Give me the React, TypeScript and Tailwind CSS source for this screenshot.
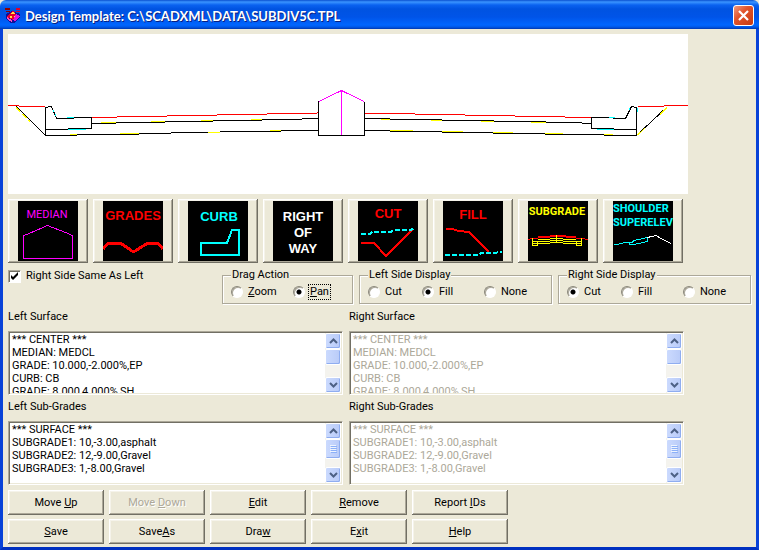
import React, { useState } from "react";

const raised =
  "bg-[#ece9d8] shadow-[inset_-1px_-1px_#716f64,inset_1px_1px_#ffffff,inset_-2px_-2px_#aca899,inset_2px_2px_#f5f3ea]";

function AppLogo() {
  return (
    <svg width="16" height="16" viewBox="0 0 16 16" shapeRendering="crispEdges" aria-hidden="true">
      <path d="M0 0h5v2h-5zM1 3h4v1h-4z" fill="#8b0000" />
      <path d="M11 0h4v2h-4zM11 3h4v1h-4z" fill="#e0002a" />
      <path d="M1 6l6 -3l8 3v4l-6 5h-3l-5 -4z" fill="#10109a" />
      <path d="M8 2l5 7l-5 3l-6 -3z" fill="#e8002c" />
      <path d="M8 3l2 3h-4zM5 8h2v2h-2zM9 8h2v2h-2z" fill="#ffe84a" />
      <path d="M11 6l4 2l-5 5l-2 -1z" fill="#e010e0" />
      <path d="M2 9l5 3v2l-5 -3z" fill="#ff50c0" />
    </svg>
  );
}

function TitleBar() {
  return (
    <header className="flex h-[29px] items-center rounded-t-md bg-[linear-gradient(to_bottom,#0a50d0_0,#3a94ff_2px,#0a62f0_5px,#0053e1_9px,#0054e8_17px,#0066ff_25px,#0058e8_27px,#0038b0_29px)] pt-[2px] pr-[5px] pl-[5px]">
      <AppLogo />
      <h1 className="ml-1 flex-1 font-[Lato,'Noto_Sans',sans-serif] text-[13px] leading-[18px] font-bold whitespace-nowrap text-white [text-shadow:1px_1px_#0a1f80]">
        Design Template: C:\SCADXML\DATA\SUBDIV5C.TPL
      </h1>
      <button
        aria-label="Close"
        className="flex size-[21px] items-center justify-center rounded-[3px] border border-white bg-[linear-gradient(135deg,#f09a80,#e1542c_40%,#c83a10)]"
      >
        <svg width="13" height="13" viewBox="0 0 13 13" aria-hidden="true">
          <path d="M2 2l9 9M11 2l-9 9" stroke="#fff" strokeWidth="2.2" />
        </svg>
      </button>
    </header>
  );
}

function CrossSection() {
  return (
    <svg
      className="mr-[63px] block bg-white"
      viewBox="8 34 680 160"
      shapeRendering="crispEdges"
      fill="none"
      strokeWidth="1"
      role="img"
      aria-label="Template cross section"
    >
      <g stroke="#ff0000">
        <path d="M8 105.5H19M19 106.5H45" />
        <path d="M92 117.5H117M117 116.5H167M167 115.5H217M217 114.5H267M267 113.5H317M317.5 113V112" />
        <path d="M364 113.5H415M415 114.5H465M465 115.5H515M515 116.5H565M565 117.5H591" />
        <path d="M638 106.5H664M664 105.5H688" />
      </g>
      <g stroke="#000000">
        <path d="M16.5 106.5L45.5 135.5V107.5L51.5 106.5L56.5 118.5H74M74 117.5H91.5V128.5H68M68 129.5H45" />
        <path d="M92 123.5H116M116 122.5H165M165 121.5H213M213 120.5H262M262 119.5H302M302 118.5H318" />
        <path d="M45 135.5H77M77 134.5H139M139 133.5H171M171 132.5H220M220 131.5H281M281 130.5H318" />
        <path d="M318.5 101V135.5H364.5V102" />
        <path d="M364 118.5H390M390 119.5H442M442 120.5H494M494 121.5H546M546 122.5H582M582 123.5H591" />
        <path d="M364 130.5H390M390 131.5H442M442 132.5H493M493 133.5H545M545 134.5H604M604 135.5H636" />
        <path d="M636 129.5H614M614 128.5H591.5V117.5H613M613 118.5H625.5L631.5 106.5L636.5 107.5V135.5L667.5 106.5" />
      </g>
      <g stroke="#ffff00">
        <path d="M16 107.5L30 121.5" strokeDasharray="6 3" />
        <path d="M101 122.5H116M151 121.5H165M201 120.5H213M251 119.5H262" />
        <path d="M70 134.5H77M120 133.5H139M208 132.5H220M270 130.5H281" />
        <path d="M381 119.5H390M431 120.5H442M481 121.5H494M531 122.5H546" />
        <path d="M390 130.5H413M442 131.5H463M493 132.5H513M545 133.5H563M604 134.5H613" />
        <path d="M637.5 135L645 128M660 114.5L667 107.5" />
      </g>
      <g stroke="#00ffff">
        <path d="M67 117.5H74M68 129.5H86M53 110L54 112M55 114L56 116" />
        <path d="M609 117.5H615M597 129.5H614M629 110L630 108M637.5 108V112" />
      </g>
      <path d="M319 101.5L341.5 90.5L364 101.5M341.5 90V135" stroke="#ff00ff" />
    </svg>
  );
}

const iconText = "font-['Liberation_Sans',Arial,sans-serif] text-[13px] font-bold";
const smallIconText = "font-[Roboto,sans-serif] text-[11px] font-bold";

const tools: { name: string; art: React.ReactNode }[] = [
  {
    name: "Median",
    art: (
      <>
        <text x="29" y="17" textAnchor="middle" fill="#ff00ff" className="font-[Roboto,sans-serif] text-[11px]">
          MEDIAN
        </text>
        <path d="M5.5 57.5V34.5L10 33L29.5 24.5L50 32.5L54.5 34.5V57.5Z" stroke="#ff00ff" />
      </>
    ),
  },
  {
    name: "Grades",
    art: (
      <>
        <text x="30" y="19" textAnchor="middle" fill="#ff0000" className={iconText}>GRADES</text>
        <path d="M0 48L5 42.5H18L29 50H32L44 42.5H55L60 48" stroke="#ff0000" strokeWidth="3" />
      </>
    ),
  },
  {
    name: "Curb",
    art: (
      <>
        <text x="31" y="20" textAnchor="middle" fill="#00ffff" className={iconText}>CURB</text>
        <path d="M13 42H39L44 29H51V54H13Z" stroke="#00ffff" strokeWidth="2" />
      </>
    ),
  },
  {
    name: "Right of way",
    art: (
      <g fill="#ffffff" textAnchor="middle" className={iconText}>
        <text x="30" y="20">RIGHT</text>
        <text x="30" y="36">OF</text>
        <text x="30" y="52">WAY</text>
      </g>
    ),
  },
  {
    name: "Cut",
    art: (
      <>
        <text x="30" y="17" textAnchor="middle" fill="#ff0000" className={iconText}>CUT</text>
        <path d="M3 42H16L28 55L54 29" stroke="#ff0000" strokeWidth="2" />
        <path d="M3 33H12L14 31H33L36 29H51L56 28" stroke="#00ffff" strokeWidth="2" strokeDasharray="5 2" />
      </>
    ),
  },
  {
    name: "Fill",
    art: (
      <>
        <text x="30" y="18" textAnchor="middle" fill="#ff0000" className={iconText}>FILL</text>
        <path d="M3 28H10L15 30L26 31L46 51" stroke="#ff0000" strokeWidth="2" />
        <path d="M2 54H35L38 52H50L59 51" stroke="#00ffff" strokeWidth="2" strokeDasharray="5 2" />
      </>
    ),
  },
  {
    name: "Subgrade",
    art: (
      <>
        <text x="29" y="14" textAnchor="middle" fill="#ffff00" className={smallIconText}>SUBGRADE</text>
        <path d="M0 38.5H2M2 37.5H10M48 37.5H57M57 38.5H60" stroke="#ff0000" />
        <path d="M10 36H22M38 36H48M22 35H38" stroke="#ff0000" strokeWidth="2" />
        <path d="M4.5 37V44.5H10M53.5 37V44.5H48M28.5 34V42M4 40.5H9.5V44M54 40.5H48.5V44M10 38.5H22M22 37.5H35M35 38.5H48M4 42.5H22M22 41.5H35M35 42.5H54M10 40.5H22M22 39.5H35M35 40.5H48" stroke="#ffff00" />
      </>
    ),
  },
  {
    name: "Shoulder superelevation",
    art: (
      <>
        <g fill="#00ffff" className={smallIconText}>
          <text x="0" y="11">SHOULDER</text>
          <text x="0" y="25">SUPERELEV</text>
        </g>
        <path d="M1 43.5H4L12 41.5H19L21 39.5L34.5 36.5V40.5L21 43.5H16.5V41" stroke="#00ffff" />
        <path d="M34 36.5L39 35.5L43 34.5L48 37.5L58 42.5" stroke="#ffffff" />
      </>
    ),
  },
];

function Toolbar() {
  return (
    <div className="mt-[5px] flex gap-[5px]">
      {tools.map((t) => (
        <button key={t.name} aria-label={t.name} className={`flex h-16 w-20 items-center justify-center ${raised}`}>
          <svg width="60" height="60" viewBox="0 0 60 60" fill="none" shapeRendering="crispEdges" className="bg-black">
            {t.art}
          </svg>
        </button>
      ))}
    </div>
  );
}

function RadioGroup({
  title,
  name,
  options,
  initial,
  className,
  columns,
}: {
  title: string;
  name: string;
  options: { id: string; label: React.ReactNode; focus?: boolean }[];
  initial: string;
  className: string;
  columns: string;
}) {
  const [value, setValue] = useState(initial);
  return (
    <fieldset
      className={`border border-[#aca899] pt-[3px] pb-1 pl-2 shadow-[1px_1px_#ffffff,inset_1px_1px_#ffffff] ${className}`}
    >
      <legend className="bg-[#ece9d8] px-px">{title}</legend>
      <div className={`grid ${columns}`}>
        {options.map((o) => (
          <label key={o.id} className="flex items-center gap-1">
            <input
              type="radio"
              name={name}
              checked={value === o.id}
              onChange={() => setValue(o.id)}
              className="size-3 appearance-none rounded-full border border-t-[#8a877a] border-r-white border-b-white border-l-[#8a877a] bg-white shadow-[inset_1px_1px_#aca899] checked:bg-[radial-gradient(circle,#000_0_2px,#fff_3px)]"
            />
            <span className={o.focus ? "px-px outline-1 outline-dotted outline-black" : "px-px"}>{o.label}</span>
          </label>
        ))}
      </div>
    </fieldset>
  );
}

function Options() {
  const sides = [
    { id: "cut", label: "Cut" },
    { id: "fill", label: "Fill" },
    { id: "none", label: "None" },
  ];
  return (
    <div className="mt-[5px] flex items-start gap-[6px]">
      <label className="mr-auto flex items-center gap-[5px] pt-px">
        <span className="relative size-[13px]">
          <input
            type="checkbox"
            defaultChecked
            className="peer block size-[13px] appearance-none border border-t-[#aca899] border-r-white border-b-white border-l-[#aca899] bg-white shadow-[inset_1px_1px_#716f64]"
          />
          <svg
            viewBox="0 0 13 13"
            className="pointer-events-none absolute inset-0 hidden size-[13px] peer-checked:block"
            aria-hidden="true"
          >
            <path d="M3 5v3l2 2l5 -5v-3l-5 5z" fill="#000" />
          </svg>
        </span>
        Right Side Same As Left
      </label>
      <RadioGroup
        title="Drag Action"
        name="drag"
        initial="pan"
        className="w-[131px]"
        columns="grid-cols-[62px_1fr]"
        options={[
          { id: "zoom", label: <><u>Z</u>oom</> },
          { id: "pan", label: <><u>P</u>an</>, focus: true },
        ]}
      />
      <RadioGroup title="Left Side Display" name="left" initial="fill" className="w-[193px]" columns="grid-cols-[54px_62px_1fr]" options={sides} />
      <RadioGroup title="Right Side Display" name="right" initial="cut" className="w-[193px]" columns="grid-cols-[54px_62px_1fr]" options={sides} />
    </div>
  );
}

const scrollPart =
  "flex w-4 items-center justify-center rounded-[2px] border border-white bg-[linear-gradient(to_right,#cbdafe,#b9cbf8)] shadow-[inset_-1px_-1px_#8fadf0]";

function ScrollBar({ grip }: { grip: boolean }) {
  return (
    <div className="flex w-4 flex-col bg-[#f4f3ee]">
      <button aria-label="Scroll up" className={`h-4 ${scrollPart}`}>
        <svg width="9" height="6" viewBox="0 0 9 6"><path d="M1 5l3.500 -3.500l3.500 3.500" fill="none" stroke="#4d6185" strokeWidth="2" /></svg>
      </button>
      <div className={`${grip ? "h-5" : "h-4"} ${scrollPart}`}>
        {grip && (
          <svg width="7" height="8" viewBox="0 0 7 8" shapeRendering="crispEdges">
            <path d="M0 .5h6M0 2.500h6M0 4.500h6M0 6.500h6" stroke="#eef4fe" />
            <path d="M1 1.500h6M1 3.500h6M1 5.500h6M1 7.500h6" stroke="#8cb0f8" />
          </svg>
        )}
      </div>
      <button aria-label="Scroll down" className={`mt-auto h-4 ${scrollPart}`}>
        <svg width="9" height="6" viewBox="0 0 9 6"><path d="M1 1l3.500 3.500l3.500 -3.500" fill="none" stroke="#4d6185" strokeWidth="2" /></svg>
      </button>
    </div>
  );
}

function ListBox({ id, title, items, disabled, grip }: { id: string; title: string; items: string[]; disabled?: boolean; grip: boolean }) {
  return (
    <div className="min-w-0">
      <label htmlFor={id} className="block">{title}</label>
      <div className="mt-[7px] flex h-16 border border-t-[#aca899] border-r-white border-b-white border-l-[#aca899] bg-white p-px shadow-[inset_1px_1px_#716f64,inset_-1px_-1px_#ece9d8]">
        <select
          id={id}
          size={4}
          disabled={disabled}
          className="h-[60px] min-w-0 flex-1 appearance-none overflow-hidden bg-transparent p-0 opacity-100 outline-none"
        >
          {items.map((s) => (
            <option key={s} className={`block h-[13px] min-h-0 p-0 pl-[2px] leading-[13px] ${disabled ? "text-[#aca899]" : "text-black"}`}>
              {s}
            </option>
          ))}
        </select>
        <ScrollBar grip={grip} />
      </div>
    </div>
  );
}

const surface = ["*** CENTER ***", "MEDIAN: MEDCL", "GRADE: 10.000,-2.000%,EP", "CURB: CB", "GRADE: 8.000,4.000%,SH"];
const subgrades = ["*** SURFACE ***", "SUBGRADE1: 10,-3.00,asphalt", "SUBGRADE2: 12,-9.00,Gravel", "SUBGRADE3: 1,-8.00,Gravel"];

const actions: { id: string; label: React.ReactNode; disabled?: boolean }[] = [
  { id: "up", label: <>Move <u>U</u>p</> },
  { id: "down", label: <>Move <u>D</u>own</>, disabled: true },
  { id: "edit", label: <><u>E</u>dit</> },
  { id: "remove", label: <><u>R</u>emove</> },
  { id: "report", label: <>Report <u>I</u>Ds</> },
  { id: "save", label: <><u>S</u>ave</> },
  { id: "saveas", label: <>Save<u>A</u>s</> },
  { id: "draw", label: <>Dra<u>w</u></> },
  { id: "exit", label: <>E<u>x</u>it</> },
  { id: "help", label: <><u>H</u>elp</> },
];

export default function App() {
  return (
    <div className="flex min-h-screen flex-col bg-[#ece9d8] font-[Roboto,Arial,sans-serif] text-[11px] leading-[14px] text-black">
      <TitleBar />
      <main className="flex-1 border-x-3 border-b-3 border-x-[#0842d8] border-b-[#0030c0] px-[5px] pt-[5px] pb-[3px]">
        <CrossSection />
        <Toolbar />
        <Options />
        <div className="mt-[6px] mr-[67px] grid grid-cols-2 gap-x-[6px] gap-y-[5px]">
          <ListBox id="left-surface" title="Left Surface" items={surface} grip={false} />
          <ListBox id="right-surface" title="Right Surface" items={surface} disabled grip={false} />
          <ListBox id="left-sub" title="Left Sub-Grades" items={subgrades} grip />
          <ListBox id="right-sub" title="Right Sub-Grades" items={subgrades} disabled grip />
        </div>
        <div className="mt-[5px] grid grid-cols-[repeat(5,96px)] gap-x-[5px] gap-y-1">
          {actions.map((a) => (
            <button
              key={a.id}
              disabled={a.disabled}
              className={`h-[25px] disabled:text-[#aca899] disabled:[text-shadow:1px_1px_#ffffff] ${raised}`}
            >
              {a.label}
            </button>
          ))}
        </div>
      </main>
    </div>
  );
}
